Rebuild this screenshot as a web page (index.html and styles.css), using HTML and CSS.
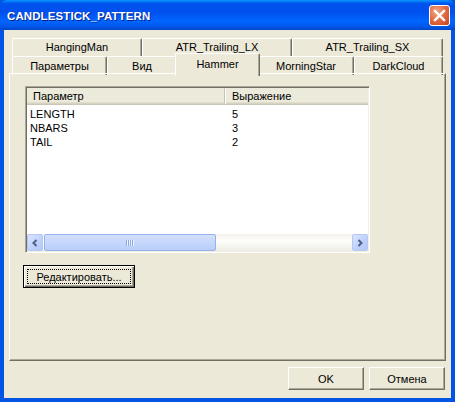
FILE: index.html
```html
<!DOCTYPE html>
<html>
<head>
<meta charset="utf-8">
<link rel="stylesheet" href="styles.css">
</head>
<body>
<div class="window">
  <div class="titlebar">
    <span class="title">CANDLESTICK_PATTERN</span>
    <div class="close">
      <svg width="13" height="13" viewBox="0 0 13 13"><path d="M2 2 L11 11 M11 2 L2 11" stroke="#fff" stroke-width="2.4" stroke-linecap="square"/></svg>
    </div>
  </div>
  <div class="frame">
    <div class="tabs">
      <div class="tabrow row1">
        <div class="tab t130">HangingMan</div>
        <div class="tab t150">ATR_Trailing_LX</div>
        <div class="tab t151">ATR_Trailing_SX</div>
      </div>
      <div class="tabrow row2">
        <div class="tab t95">Параметры</div>
        <div class="tab t70">Вид</div>
        <div class="tab sel">Hammer</div>
        <div class="tab t96">MorningStar</div>
        <div class="tab t89">DarkCloud</div>
      </div>
    </div>
    <div class="panel">
      <div class="list">
        <div class="lhead">
          <div class="hc c1">Параметр</div>
          <div class="hc c2">Выражение</div>
        </div>
        <div class="lbody">
          <div class="lrow"><span class="r1">LENGTH</span><span class="r2">5</span></div>
          <div class="lrow"><span class="r1">NBARS</span><span class="r2">3</span></div>
          <div class="lrow"><span class="r1">TAIL</span><span class="r2">2</span></div>
        </div>
        <div class="hscroll">
          <div class="sbtn">
            <svg width="8" height="8" viewBox="0 0 8 8"><path d="M5.5 1 L2.5 4 L5.5 7" fill="none" stroke="#4D6185" stroke-width="2"/></svg>
          </div>
          <div class="thumb">
            <svg width="8" height="6" viewBox="0 0 8 6"><path d="M0.5 0 V6 M2.5 0 V6 M4.5 0 V6 M6.5 0 V6" stroke="#8CA7E4" stroke-width="1"/><path d="M1.5 0 V6 M3.5 0 V6 M5.5 0 V6 M7.5 0 V6" stroke="#EEF4FE" stroke-width="1"/></svg>
          </div>
          <div class="track"></div>
          <div class="sbtn">
            <svg width="8" height="8" viewBox="0 0 8 8"><path d="M2.5 1 L5.5 4 L2.5 7" fill="none" stroke="#4D6185" stroke-width="2"/></svg>
          </div>
        </div>
      </div>
      <div class="editbtn"><span class="focus">Редактировать...</span></div>
    </div>
    <div class="footer">
      <div class="btn">OK</div>
      <div class="btn">Отмена</div>
    </div>
  </div>
</div>
</body>
</html>
```

FILE: styles.css
```css
html, body {
  margin: 0;
  padding: 0;
  background: #0054E3;
}
.window {
  width: 455px;
  height: 402px;
  display: flex;
  flex-direction: column;
  font-family: "Liberation Sans", Arial, sans-serif;
  font-size: 11px;
  color: #000;
  background: #0054E3;
}
.titlebar {
  height: 30px;
  flex: none;
  display: flex;
  align-items: center;
  justify-content: space-between;
  padding: 0 5px 0 7px;
  background: linear-gradient(#0997FF 0%, #0053EE 12%, #0050EE 40%, #0066FF 70%, #0055E5 90%, #0047C8 100%);
  border-radius: 7px 7px 0 0;
}
.title {
  color: #fff;
  font-weight: bold;
  font-size: 11.5px;
  letter-spacing: 0.1px;
  text-shadow: 1px 1px 0 #0A1E8C;
  padding-top: 1px;
}
.close {
  width: 19px;
  height: 19px;
  border: 1px solid #fff;
  border-radius: 3px;
  background: radial-gradient(circle at 35% 30%, #F0A78B 0%, #E46F45 45%, #C4401A 100%);
  display: flex;
  align-items: center;
  justify-content: center;
  margin-top: 1px;
}
.close svg { display: block; }
.frame {
  flex: 1;
  background: #ECE9D8;
  border-left: 4px solid #0055E5;
  border-right: 4px solid #0055E5;
  border-bottom: 4px solid #0055E5;
  display: flex;
  flex-direction: column;
  padding: 8px 5px 0 5px;
}
.tabs {
  margin: 0 3px 0 3px;
  display: flex;
  flex-direction: column;
}
.tabrow {
  display: flex;
  height: 18px;
}
.tab {
  box-sizing: border-box;
  height: 18px;
  display: flex;
  align-items: center;
  justify-content: center;
  background: #ECE9D8;
  border-top: 1px solid #fff;
  border-left: 1px solid #fff;
  border-right: 1px solid #716F64;
  box-shadow: inset -1px 0 0 #ACA899;
  border-radius: 2px 2px 0 0;
}
.row1 .tab { padding-bottom: 2px; }
.row2 .tab { height: 19px; }
.t130 { width: 130px; }
.t150 { width: 150px; }
.t151 { width: 151px; }
.t95 { width: 95px; }
.t70 { width: 70px; }
.t96 { width: 96px; }
.t89 { width: 89px; }
.tab.sel {
  width: 85px;
  margin: -3px -2px 0 -2px;
  height: 23px;
  position: relative;
  z-index: 2;
  padding-bottom: 2px;
}
.panel {
  position: relative;
  z-index: 1;
  height: 288px;
  box-sizing: border-box;
  border-top: 1px solid #fff;
  border-left: 1px solid #fff;
  border-right: 1px solid #716F64;
  border-bottom: 1px solid #716F64;
  box-shadow: inset -1px -1px 0 #ACA899;
  padding: 12px 0 0 13px;
  display: flex;
  flex-direction: column;
  align-items: flex-start;
  margin-top: -1px;
}
.list {
  margin-left: 2px;
  width: 345px;
  height: 167px;
  box-sizing: border-box;
  border-top: 1px solid #ACA899;
  border-left: 1px solid #ACA899;
  border-right: 1px solid #fff;
  border-bottom: 1px solid #fff;
  box-shadow: inset 1px 1px 0 #716F64, inset -1px -1px 0 #F1EFE2;
  background: #fff;
  padding: 1px;
  display: flex;
  flex-direction: column;
}
.lhead {
  height: 17px;
  flex: none;
  display: flex;
  background: #EBEADB;
  box-sizing: border-box;
  border-bottom: 1px solid #CBC7B8;
  box-shadow: inset 0 -1px 0 #D6D2C2, inset 0 -2px 0 #E2DECD;
}
.hc {
  display: flex;
  align-items: center;
  box-sizing: border-box;
  padding-bottom: 1px;
}
.hc.c1 {
  width: 198px;
  padding-left: 6px;
  border-right: 1px solid #C7C5B2;
}
.hc.c2 {
  width: 142px;
  padding-left: 6px;
  border-left: 1px solid #fff;
}
.lbody {
  flex: 1;
  padding-top: 2px;
}
.lrow {
  height: 14px;
  display: flex;
  align-items: center;
}
.r1 {
  width: 198px;
  padding-left: 3px;
  box-sizing: border-box;
}
.r2 {
  padding-left: 7px;
}
.hscroll {
  height: 17px;
  flex: none;
  display: flex;
  background: linear-gradient(#F3F1EC, #FEFEFB 40%, #EEEDE5);
}
.sbtn {
  flex: none;
  border: 1px solid #B4C8F6;
  border-radius: 2px;
  background: linear-gradient(135deg, #DCE6FD, #C2D3FC 50%, #B3C8F5);
  display: flex;
  align-items: center;
  justify-content: center;
  box-sizing: border-box;
  width: 16px;
  height: 17px;
}
.thumb {
  width: 172px;
  flex: none;
  box-sizing: border-box;
  border: 1px solid #98B1E9;
  border-radius: 2px;
  background: linear-gradient(#D3E0FD, #C5D7FC 50%, #B9CEF9);
  display: flex;
  align-items: center;
  justify-content: center;
  margin-left: 1px;
}
.thumb svg { display: block; }
.track { flex: 1; }
.editbtn {
  margin-top: 12px;
  width: 112px;
  height: 23px;
  box-sizing: border-box;
  border: 1px solid #000;
  box-shadow: inset 1px 1px 0 #fff, inset -1px -1px 0 #716F64, inset -2px -2px 0 #ACA899;
  background: #ECE9D8;
  display: flex;
  padding: 3px;
}
.focus {
  flex: 1;
  border: 1px dotted #000;
  display: flex;
  align-items: center;
  justify-content: center;
}
.footer {
  display: flex;
  justify-content: flex-end;
  gap: 5px;
  padding: 6px 1px 0 0;
}
.btn {
  width: 76px;
  height: 23px;
  box-sizing: border-box;
  background: #ECE9D8;
  border-top: 1px solid #fff;
  border-left: 1px solid #fff;
  border-right: 1px solid #716F64;
  border-bottom: 1px solid #716F64;
  box-shadow: inset -1px -1px 0 #ACA899;
  display: flex;
  align-items: center;
  justify-content: center;
}
```
